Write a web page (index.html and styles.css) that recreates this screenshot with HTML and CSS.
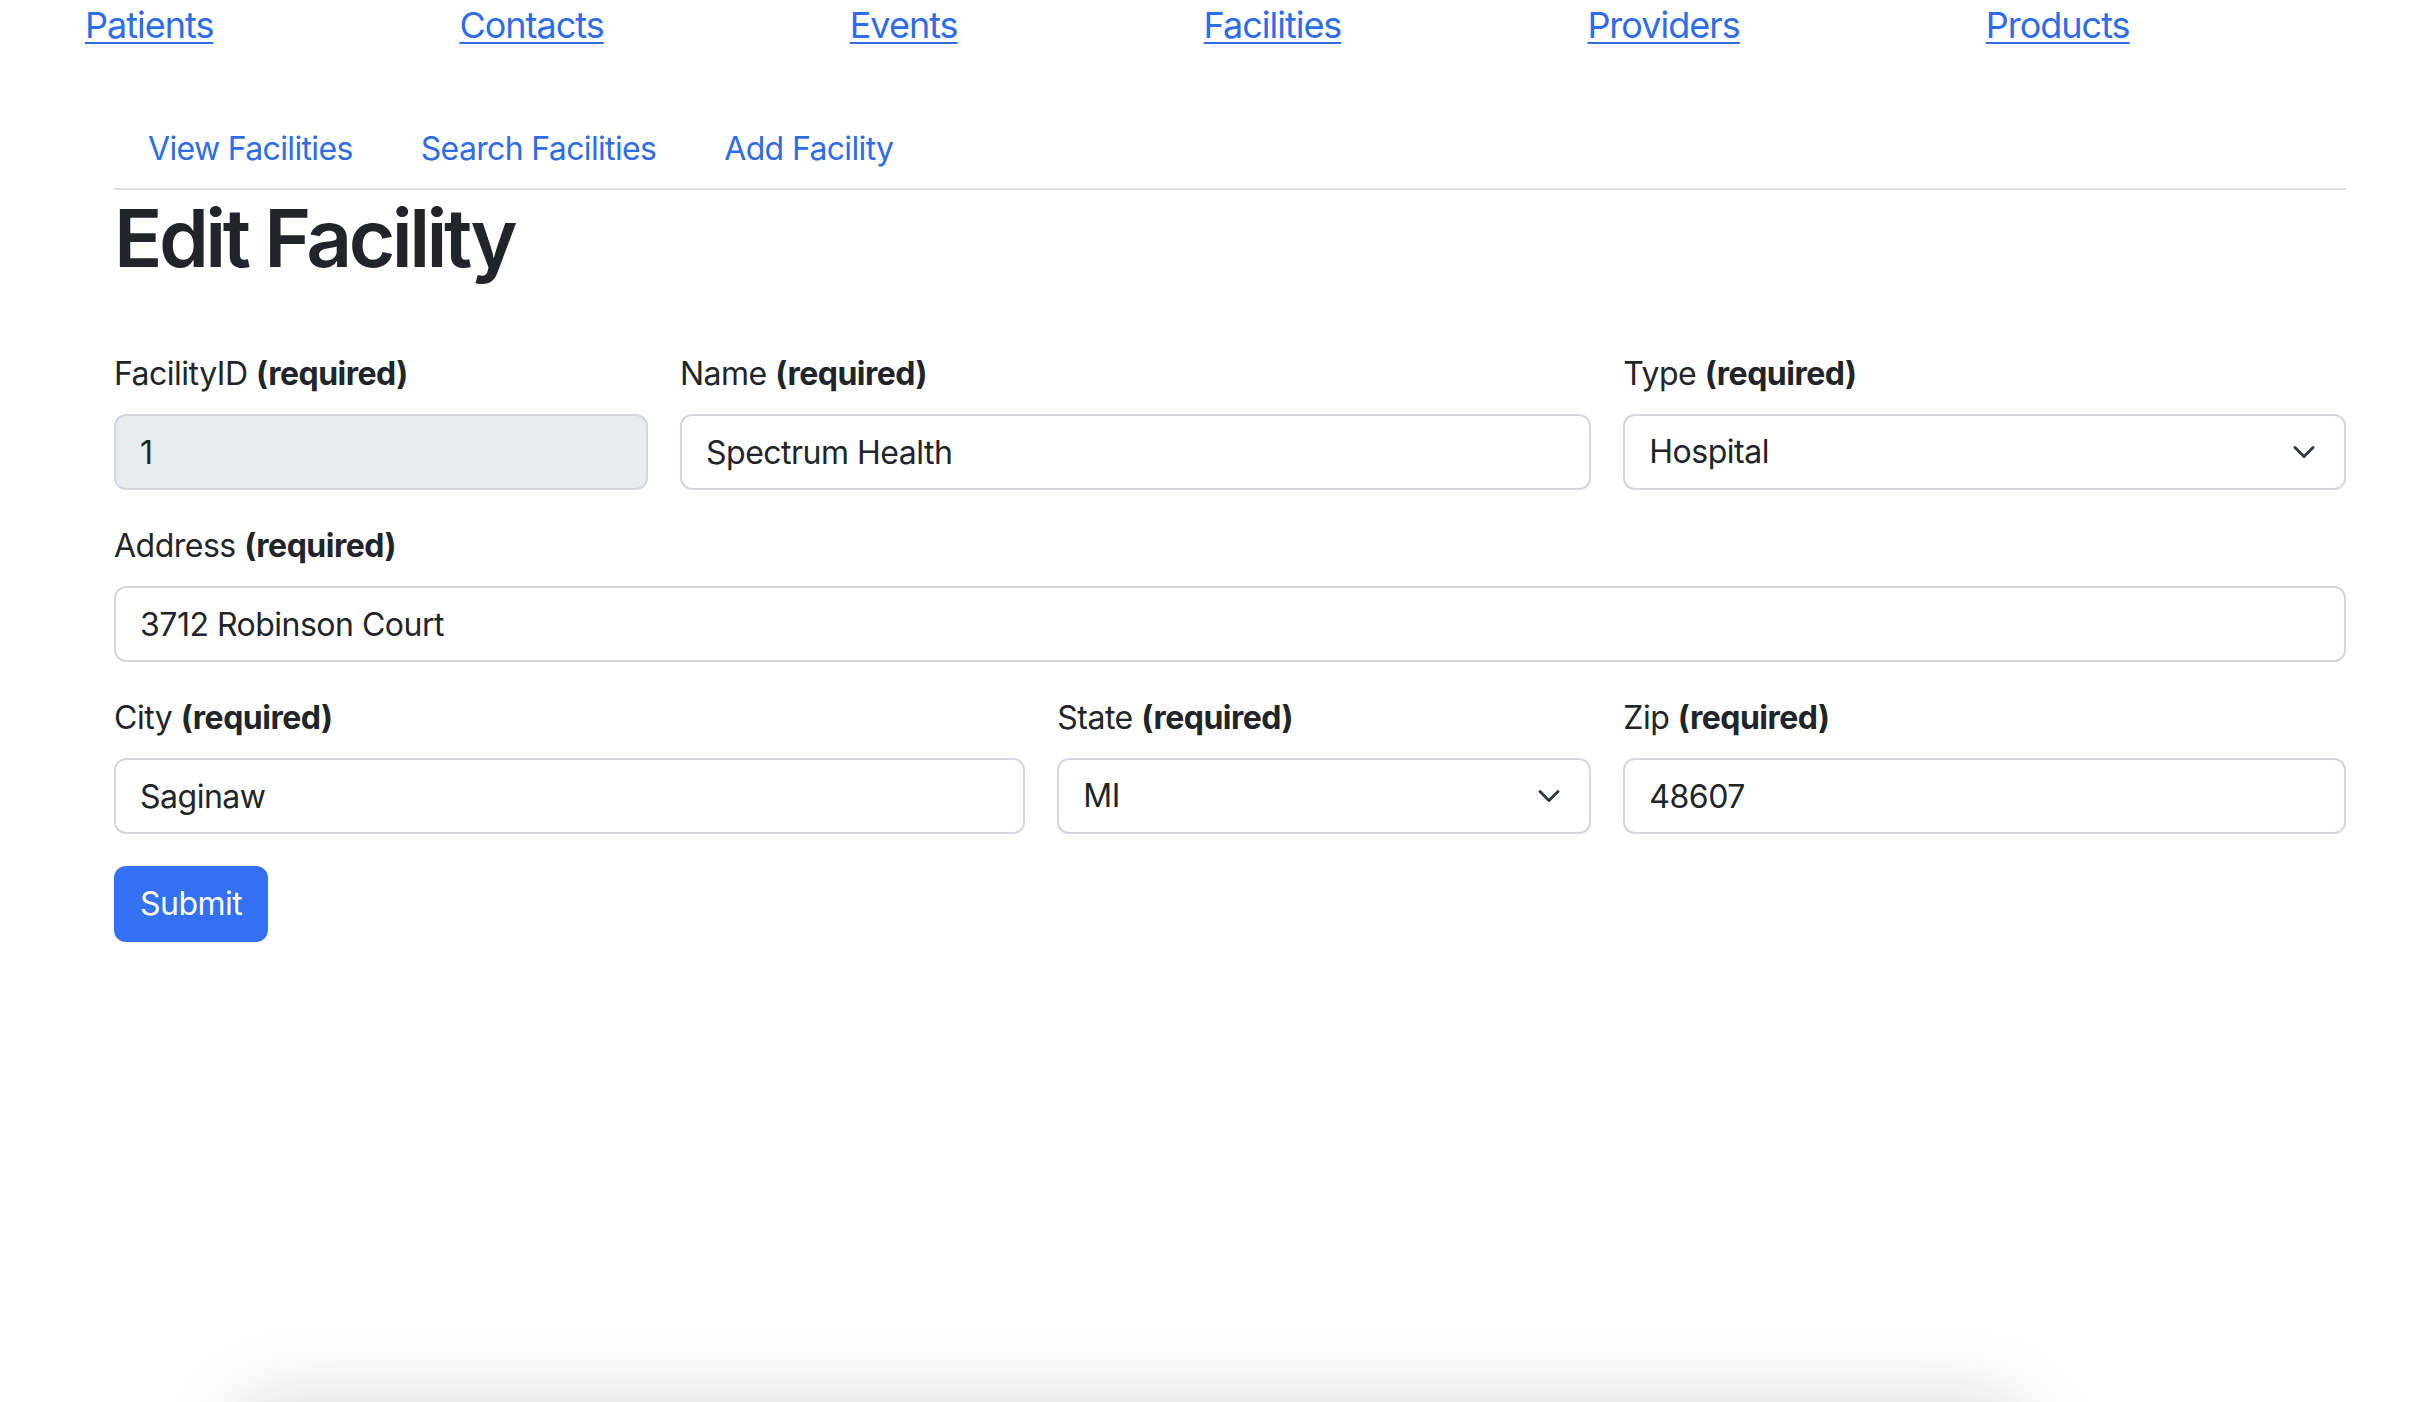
FILE: index.html
```html
<!DOCTYPE html>
<html lang="en">
<head>
<meta charset="utf-8">
<title>Edit Facility</title>
<link rel="stylesheet" href="styles.css">
</head>
<body>
<nav class="topnav">
  <a href="#">Patients</a>
  <a href="#">Contacts</a>
  <a href="#">Events</a>
  <a href="#">Facilities</a>
  <a href="#">Providers</a>
  <a href="#">Products</a>
</nav>
<main class="page">
  <ul class="tabs">
    <li><a class="tab" href="#">View Facilities</a></li>
    <li><a class="tab" href="#">Search Facilities</a></li>
    <li><a class="tab" href="#">Add Facility</a></li>
  </ul>
  <h1 class="title">Edit Facility</h1>
  <form class="form">
    <div class="field col-3">
      <label class="label">FacilityID <b>(required)</b></label>
      <input class="control readonly" type="text" value="1" readonly>
    </div>
    <div class="field col-5">
      <label class="label">Name <b>(required)</b></label>
      <input class="control" type="text" value="Spectrum Health">
    </div>
    <div class="field col-4">
      <label class="label">Type <b>(required)</b></label>
      <div class="select-wrap">
        <select class="control select"><option>Hospital</option></select>
        <svg class="chev" viewBox="0 0 16 16" width="24" height="24"><path d="M2 5l6 6 6-6" fill="none" stroke="#343a40" stroke-width="2" stroke-linecap="round" stroke-linejoin="round"/></svg>
      </div>
    </div>
    <div class="field col-12">
      <label class="label">Address <b>(required)</b></label>
      <input class="control" type="text" value="3712 Robinson Court">
    </div>
    <div class="field col-5">
      <label class="label">City <b>(required)</b></label>
      <input class="control" type="text" value="Saginaw">
    </div>
    <div class="field col-3">
      <label class="label">State <b>(required)</b></label>
      <div class="select-wrap">
        <select class="control select"><option>MI</option></select>
        <svg class="chev" viewBox="0 0 16 16" width="24" height="24"><path d="M2 5l6 6 6-6" fill="none" stroke="#343a40" stroke-width="2" stroke-linecap="round" stroke-linejoin="round"/></svg>
      </div>
    </div>
    <div class="field col-4">
      <label class="label">Zip <b>(required)</b></label>
      <input class="control" type="text" value="48607">
    </div>
    <div class="col-12">
      <button class="btn" type="button">Submit</button>
    </div>
  </form>
</main>
<div class="dock-shadow"></div>
</body>
</html>
```
FILE: styles.css
```css
html, body {
  margin: 0;
  padding: 0;
  background: #fff;
  overflow: hidden;
}
body {
  font-family: Inter, "Liberation Sans", Arial, sans-serif;
  color: #212529;
  font-size: 32px;
  line-height: 48px;
  height: 1402px;
}
.topnav {
  display: flex;
  gap: 246px;
  padding-left: 85px;
  height: 54px;
  font-size: 36px;
  line-height: 50px;
  letter-spacing: -1px;
}
.topnav a {
  color: #2f6ce6;
  text-decoration: underline;
  text-decoration-thickness: 2px;
  text-underline-offset: 4px;
}
.page {
  margin-left: 114px;
  width: 2232px;
}
.tabs {
  list-style: none;
  margin: 52px 0 0;
  padding: 0;
  display: flex;
  border-bottom: 2px solid #dee2e6;
}
.tab {
  display: block;
  padding: 17px 32px 15px;
  border: 2px solid transparent;
  margin-bottom: -2px;
  color: #2f6ce6;
  text-decoration: none;
  font-size: 32px;
  line-height: 48px;
  letter-spacing: -0.65px;
}
.title {
  margin: 0 0 64px;
  font-size: 80px;
  line-height: 96px;
  font-weight: 600;
  letter-spacing: -3.5px;
  color: #212529;
}
.form {
  display: grid;
  grid-template-columns: repeat(12, 1fr);
  column-gap: 32px;
  row-gap: 32px;
}
.col-3 { grid-column: span 3; }
.col-4 { grid-column: span 4; }
.col-5 { grid-column: span 5; }
.col-12 { grid-column: span 12; }
.field {
  display: flex;
  flex-direction: column;
}
.label {
  display: block;
  margin-bottom: 16px;
  font-size: 32px;
  line-height: 48px;
  letter-spacing: -0.5px;
}
.label b {
  font-weight: 700;
}
.control {
  box-sizing: border-box;
  width: 100%;
  height: 76px;
  padding: 12px 24px;
  border: 2px solid #d3d7db;
  border-radius: 12px;
  background: #fff;
  font-family: inherit;
  font-size: 32px;
  line-height: 48px;
  color: #212529;
  letter-spacing: -0.5px;
  outline: none;
  margin: 0;
}
.readonly {
  background: #e9ecef;
}
.select-wrap {
  position: relative;
}
.select {
  appearance: none;
  -webkit-appearance: none;
  padding-right: 72px;
}
.chev {
  position: absolute;
  right: 30px;
  top: 26px;
  pointer-events: none;
}
.btn {
  box-sizing: border-box;
  height: 76px;
  padding: 12px 24px;
  border: 2px solid #3370f2;
  border-radius: 12px;
  background: #3370f2;
  color: #fff;
  font-family: inherit;
  font-size: 32px;
  line-height: 48px;
  letter-spacing: -0.5px;
}
.dock-shadow {
  position: fixed;
  left: 250px;
  width: 1760px;
  bottom: -120px;
  height: 100px;
  border-radius: 40px;
  box-shadow: 0 0 70px 30px rgba(0, 0, 0, 0.13);
}
```
